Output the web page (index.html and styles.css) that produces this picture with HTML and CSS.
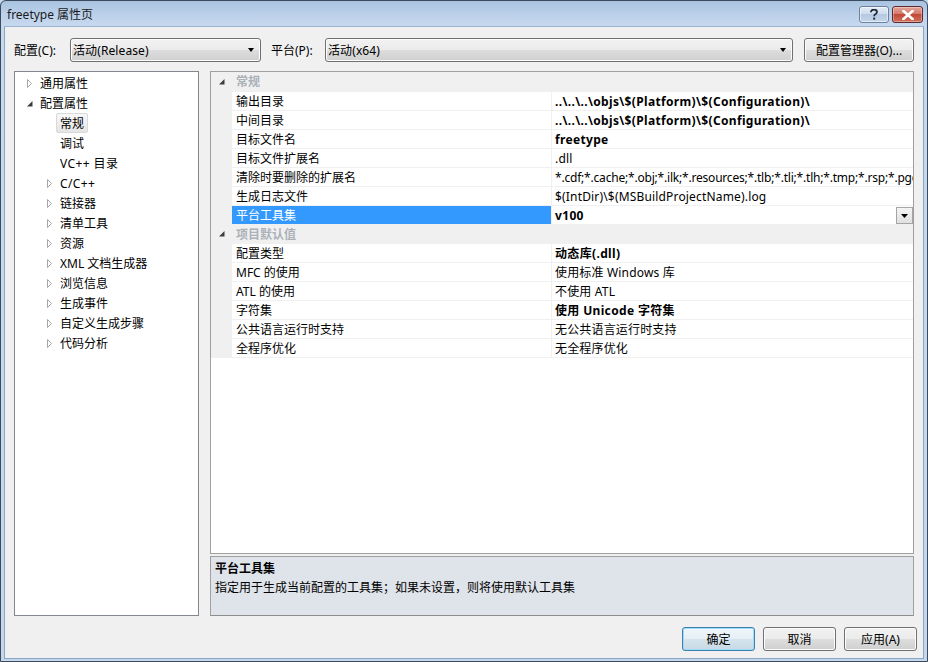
FILE: index.html
```html
<!DOCTYPE html>
<html lang="zh-CN">
<head>
<meta charset="utf-8">
<title>freetype 属性页</title>
<link rel="stylesheet" href="styles.css">
</head>
<body>
<div class="window">
  <div class="titlebar">
    <span class="title">freetype 属性页</span>
    <div class="caps">
      <div class="cap help">
        <svg width="10" height="11" viewBox="0 0 10 11"><path d="M2 3.2 C2 1.4 3.3 0.6 5 0.6 C6.8 0.6 8 1.6 8 3 C8 4.4 7 5 6 5.6 C5.4 6 5.2 6.4 5.2 7.2" fill="none" stroke="#1e2a3a" stroke-width="1.8"/><rect x="4.2" y="8.6" width="2" height="2" fill="#1e2a3a"/></svg>
      </div>
      <div class="cap close">
        <svg width="12" height="10" viewBox="0 0 12 10"><path d="M1.5 1 L10.5 9 M10.5 1 L1.5 9" stroke="#fff" stroke-width="2.6" stroke-linecap="square"/></svg>
      </div>
    </div>
  </div>
  <div class="client">
    <div class="toolbar">
      <span class="lbl lbl-cfg">配置(C):</span>
      <div class="combo combo-cfg"><span class="combo-text">活动(Release)</span><span class="combo-arrow"></span></div>
      <span class="lbl lbl-plat">平台(P):</span>
      <div class="combo combo-plat"><span class="combo-text">活动(x64)</span><span class="combo-arrow"></span></div>
      <div class="btn btn-mgr">配置管理器(O)...</div>
    </div>
    <div class="main">
      <div class="tree">
        <div class="node l0"><span class="tw"><svg width="6" height="9" viewBox="0 0 6 9"><path d="M0.5 0.5 L4.5 4.5 L0.5 8.5 Z" fill="#fff" stroke="#a6a6a6"/></svg></span><span class="nt">通用属性</span></div>
        <div class="node l0"><span class="tw"><svg width="6" height="6" viewBox="0 0 6 6"><path d="M5.5 0 L5.5 5.5 L0 5.5 Z" fill="#3c3c3c"/></svg></span><span class="nt">配置属性</span></div>
        <div class="node l1 leaf"><span class="tw"></span><span class="nt sel">常规</span></div>
        <div class="node l1 leaf"><span class="tw"></span><span class="nt">调试</span></div>
        <div class="node l1 leaf"><span class="tw"></span><span class="nt lat">VC++ 目录</span></div>
        <div class="node l1"><span class="tw"><svg width="6" height="9" viewBox="0 0 6 9"><path d="M0.5 0.5 L4.5 4.5 L0.5 8.5 Z" fill="#fff" stroke="#a6a6a6"/></svg></span><span class="nt lat">C/C++</span></div>
        <div class="node l1"><span class="tw"><svg width="6" height="9" viewBox="0 0 6 9"><path d="M0.5 0.5 L4.5 4.5 L0.5 8.5 Z" fill="#fff" stroke="#a6a6a6"/></svg></span><span class="nt">链接器</span></div>
        <div class="node l1"><span class="tw"><svg width="6" height="9" viewBox="0 0 6 9"><path d="M0.5 0.5 L4.5 4.5 L0.5 8.5 Z" fill="#fff" stroke="#a6a6a6"/></svg></span><span class="nt">清单工具</span></div>
        <div class="node l1"><span class="tw"><svg width="6" height="9" viewBox="0 0 6 9"><path d="M0.5 0.5 L4.5 4.5 L0.5 8.5 Z" fill="#fff" stroke="#a6a6a6"/></svg></span><span class="nt">资源</span></div>
        <div class="node l1"><span class="tw"><svg width="6" height="9" viewBox="0 0 6 9"><path d="M0.5 0.5 L4.5 4.5 L0.5 8.5 Z" fill="#fff" stroke="#a6a6a6"/></svg></span><span class="nt">XML 文档生成器</span></div>
        <div class="node l1"><span class="tw"><svg width="6" height="9" viewBox="0 0 6 9"><path d="M0.5 0.5 L4.5 4.5 L0.5 8.5 Z" fill="#fff" stroke="#a6a6a6"/></svg></span><span class="nt">浏览信息</span></div>
        <div class="node l1"><span class="tw"><svg width="6" height="9" viewBox="0 0 6 9"><path d="M0.5 0.5 L4.5 4.5 L0.5 8.5 Z" fill="#fff" stroke="#a6a6a6"/></svg></span><span class="nt">生成事件</span></div>
        <div class="node l1"><span class="tw"><svg width="6" height="9" viewBox="0 0 6 9"><path d="M0.5 0.5 L4.5 4.5 L0.5 8.5 Z" fill="#fff" stroke="#a6a6a6"/></svg></span><span class="nt">自定义生成步骤</span></div>
        <div class="node l1"><span class="tw"><svg width="6" height="9" viewBox="0 0 6 9"><path d="M0.5 0.5 L4.5 4.5 L0.5 8.5 Z" fill="#fff" stroke="#a6a6a6"/></svg></span><span class="nt">代码分析</span></div>
      </div>
      <div class="right">
        <div class="grid">
          <div class="row cat first"><span class="gut"><svg width="6" height="6" viewBox="0 0 6 6"><path d="M5.5 0 L5.5 5.5 L0 5.5 Z" fill="#3c3c3c"/></svg></span><span class="cat-name">常规</span></div>
          <div class="row"><span class="gut"></span><span class="name">输出目录</span><span class="val b">..\..\..\objs\$(Platform)\$(Configuration)\</span></div>
          <div class="row"><span class="gut"></span><span class="name">中间目录</span><span class="val b">..\..\..\objs\$(Platform)\$(Configuration)\</span></div>
          <div class="row"><span class="gut"></span><span class="name">目标文件名</span><span class="val b">freetype</span></div>
          <div class="row"><span class="gut"></span><span class="name">目标文件扩展名</span><span class="val">.dll</span></div>
          <div class="row"><span class="gut"></span><span class="name">清除时要删除的扩展名</span><span class="val tight">*.cdf;*.cache;*.obj;*.ilk;*.resources;*.tlb;*.tli;*.tlh;*.tmp;*.rsp;*.pgc</span></div>
          <div class="row"><span class="gut"></span><span class="name">生成日志文件</span><span class="val">$(IntDir)\$(MSBuildProjectName).log</span></div>
          <div class="row selrow"><span class="gut"></span><span class="name">平台工具集</span><span class="val b">v100<span class="dd"><svg width="7" height="4" viewBox="0 0 7 4"><path d="M0 0 H7 L3.5 4 Z" fill="#000"/></svg></span></span></div>
          <div class="row cat"><span class="gut"><svg width="6" height="6" viewBox="0 0 6 6"><path d="M5.5 0 L5.5 5.5 L0 5.5 Z" fill="#3c3c3c"/></svg></span><span class="cat-name">项目默认值</span></div>
          <div class="row"><span class="gut"></span><span class="name">配置类型</span><span class="val b">动态库(.dll)</span></div>
          <div class="row"><span class="gut"></span><span class="name">MFC 的使用</span><span class="val">使用标准 Windows 库</span></div>
          <div class="row"><span class="gut"></span><span class="name">ATL 的使用</span><span class="val">不使用 ATL</span></div>
          <div class="row"><span class="gut"></span><span class="name">字符集</span><span class="val b">使用 Unicode 字符集</span></div>
          <div class="row"><span class="gut"></span><span class="name">公共语言运行时支持</span><span class="val">无公共语言运行时支持</span></div>
          <div class="row"><span class="gut"></span><span class="name">全程序优化</span><span class="val">无全程序优化</span></div>
        </div>
        <div class="desc">
          <div class="desc-title">平台工具集</div>
          <div class="desc-text">指定用于生成当前配置的工具集；如果未设置，则将使用默认工具集</div>
        </div>
      </div>
    </div>
    <div class="footer">
      <div class="btn btn-ok">确定</div>
      <div class="btn">取消</div>
      <div class="btn">应用(A)</div>
    </div>
  </div>
</div>
</body>
</html>
```

FILE: styles.css
```css
* { box-sizing: border-box; }
html, body { margin: 0; padding: 0; }
body {
  width: 928px;
  height: 662px;
  overflow: hidden;
  background: #c4d7ec;
  font-family: "Noto Sans", "Noto Sans CJK SC", sans-serif;
  font-size: 12px;
  color: #000;
}
.window {
  width: 928px;
  height: 662px;
  border: 1px solid #3b4a5c;
  border-radius: 6px 6px 0 0;
  background: linear-gradient(to bottom, #a9c3e0 0px, #bcd1ea 14px, #c7d9ee 26px, #c4d7ec 100%);
  display: flex;
  flex-direction: column;
}
.titlebar {
  height: 25px;
  display: flex;
  align-items: center;
  padding-left: 6px;
  position: relative;
  flex: none;
}
.title {
  color: #1b1b1b;
  font-size: 12px;
  line-height: 16px;
  margin-top: 2px;
}
.caps {
  position: absolute;
  right: 4px;
  top: 5px;
  display: flex;
  gap: 3px;
}
.cap {
  height: 17px;
  border-radius: 3px;
  display: flex;
  align-items: center;
  justify-content: center;
}
.help {
  width: 30px;
  border: 1px solid #6d829c;
  background: linear-gradient(to bottom, #e4ecf6 0%, #cedcec 45%, #b5c9e1 50%, #c4d6eb 100%);
  box-shadow: inset 0 0 0 1px rgba(255,255,255,0.55);
}
.close {
  width: 31px;
  border: 1px solid #5c2a2a;
  background: linear-gradient(to bottom, #e6a59a 0%, #d3796b 45%, #c04a38 50%, #d06f5c 100%);
  box-shadow: inset 0 0 0 1px rgba(255,255,255,0.35);
}
.client {
  flex: 1;
  margin: 0 3px 2px 3px;
  background: #f0f0f0;
  border: 1px solid #8aa6c6;
  border-top-color: #9cb4d2;
  padding: 11px 9px 0 9px;
  display: flex;
  flex-direction: column;
}
.toolbar {
  height: 24px;
  display: flex;
  align-items: center;
  flex: none;
}
.lbl { line-height: 16px; padding-top: 2px; }
.lbl-cfg { width: 56px; }
.lbl-plat { width: 54px; margin-left: 10px; }
.combo, .btn {
  height: 24px;
  border: 1px solid #707070;
  border-radius: 3px;
  background: linear-gradient(to bottom, #f2f2f2 0%, #ebebeb 48%, #dddddd 52%, #cfcfcf 100%);
  box-shadow: inset 0 0 0 1px #fcfcfc;
}
.combo {
  display: flex;
  align-items: center;
  padding: 0 6px 0 2px;
}
.combo-cfg { width: 191px; }
.combo-plat { width: 468px; }
.combo-text { flex: 1; line-height: 16px; padding-top: 2px; white-space: nowrap; letter-spacing: 0.1px; }
.combo-arrow {
  width: 0;
  height: 0;
  border-left: 3.5px solid transparent;
  border-right: 3.5px solid transparent;
  border-top: 4px solid #000;
}
.btn {
  display: flex;
  align-items: center;
  justify-content: center;
  line-height: 16px;
  padding-top: 1px;
  white-space: nowrap;
}
.btn-mgr { width: 110px; margin-left: 11px; }
.main {
  margin-top: 9px;
  height: 545px;
  display: flex;
  gap: 11px;
  flex: none;
}
.tree {
  width: 186px;
  border: 1px solid #828790;
  background: #fff;
  padding-top: 1px;
}
.node {
  height: 20px;
  display: flex;
  align-items: center;
  white-space: nowrap;
}
.tw {
  width: 13px;
  display: flex;
  align-items: center;
  justify-content: flex-start;
  padding-top: 1px;
}
.node.l0 { padding-left: 12px; }
.node.l1 { padding-left: 32px; }
.nt { line-height: 16px; padding: 2px 4px 0 0; }
.nt.lat { letter-spacing: 0.4px; }
.nt.sel {
  margin-left: -4px;
  padding: 2px 3px 0 3px;
  height: 20px;
  line-height: 16px;
  border: 1px solid #d9d9d9;
  border-radius: 2px;
  background: linear-gradient(to bottom, #f8f8f8, #e5e5e5);
}
.right {
  width: 704px;
  display: flex;
  flex-direction: column;
}
.grid {
  height: 483px;
  border: 1px solid #a0a0a0;
  background: #fff;
  overflow: hidden;
}
.row {
  height: 19px;
  display: flex;
  border-bottom: 1px solid #f0f0f0;
  white-space: nowrap;
}
.row.cat { background: #f0f0f0; }
.row.cat.first { height: 20px; }
.gut {
  width: 21px;
  flex: none;
  background: #f0f0f0;
  display: flex;
  align-items: center;
  justify-content: center;
  padding-left: 1px;
}
.cat-name {
  padding: 2px 0 0 4px;
  line-height: 16px;
  color: #abb1b9;
  font-weight: bold;
}
.name {
  width: 320px;
  flex: none;
  height: 18px;
  padding: 2px 0 0 4px;
  line-height: 16px;
  border-right: 1px solid #f0f0f0;
  overflow: hidden;
}
.val {
  flex: 1;
  height: 18px;
  padding: 2px 0 0 3px;
  line-height: 16px;
  overflow: hidden;
  position: relative;
  letter-spacing: 0.17px;
}
.val.tight { letter-spacing: -0.2px; }
.val.b { font-weight: bold; letter-spacing: 0.34px; }
.selrow .name { background: #3399ff; color: #fff; }
.dd {
  position: absolute;
  right: 0;
  top: 1px;
  width: 17px;
  height: 17px;
  border: 1px solid #a5a5a5;
  background: linear-gradient(to bottom, #f4f4f4, #e0e0e0);
  display: flex;
  align-items: center;
  justify-content: center;
}
.desc {
  margin-top: 2px;
  flex: 1;
  border: 1px solid #a0a0a0;
  border-bottom-color: #8e8e8e;
  background: #dfe3ea;
  padding: 3px 4px 0 4px;
}
.desc-title { font-weight: bold; line-height: 18px; }
.desc-text { line-height: 19px; }
.footer {
  margin-top: 11px;
  margin-right: -3px;
  display: flex;
  justify-content: flex-end;
  gap: 8px;
  flex: none;
}
.footer .btn { width: 73px; }
.btn-ok {
  border-color: #3c7fb1;
  box-shadow: inset 0 0 0 1px #9fdcf7;
  background: linear-gradient(to bottom, #f0f7fb 0%, #e6eff5 48%, #d5e3ec 52%, #c8d9e4 100%);
}
```
